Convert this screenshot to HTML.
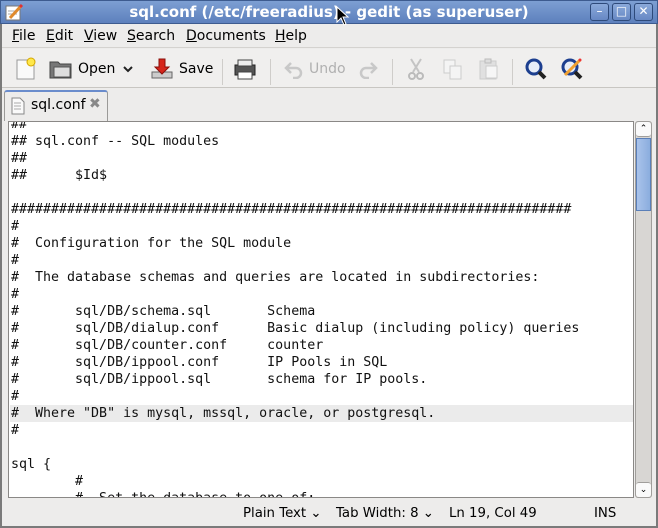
<!DOCTYPE html>
<html><head><meta charset="utf-8"><style>
*{margin:0;padding:0;box-sizing:border-box}
body{width:658px;height:528px;overflow:hidden;background:#edeceb;font-family:"DejaVu Sans","Liberation Sans",sans-serif;font-size:13.3px;color:#000;position:relative}
.abs{position:absolute}
#title{left:0;top:0;width:658px;height:24px;background:linear-gradient(#7d9fd3,#5d80bd);border:1px solid #3d5b8f;color:#fff;font-weight:bold;font-size:15px;text-align:center;line-height:23px}
.wb{top:3px;width:19px;height:18px;border:1px solid #2e4a7a;border-radius:3px;background:linear-gradient(#8aa9da,#6788c4);color:#fff;font-size:12px;text-align:center;line-height:15px}
#frame{left:0;top:24px;width:658px;height:504px;border-left:2px solid #7a7a7a;border-right:2px solid #7a7a7a;border-bottom:2px solid #7a7a7a}
#menu{left:2px;top:24px;width:654px;height:24px;border-bottom:1px solid #d4d2cf}
#menu span{position:absolute;top:4px;font-size:14px}
#tb{left:2px;top:49px;width:654px;height:39px;border-bottom:1px solid #c8c6c2;background:#f0efee}
.tl{position:absolute;top:12px;font-size:14px}
.sep{position:absolute;top:10px;width:1px;height:26px;background:#cfcdca}
#tab{left:4px;top:90px;width:104px;height:31px;background:#edeceb;border:1px solid #9b9a98;border-bottom:none;border-radius:3px 3px 0 0;border-top:2px solid #6a8ccc}
#edit{left:8px;top:121px;width:626px;height:377px;background:#fff;border:1px solid #8a8886;overflow:hidden}
pre{position:absolute;left:2px;top:-6px;font-family:"DejaVu Sans Mono","Liberation Mono",monospace;font-size:13.3px;line-height:17px;color:#111}
#hl{left:1px;top:283px;width:624px;height:17px;background:#ebebeb}
#sb{left:635px;top:121px;width:17px;height:377px;background:#d8d6d3;border:1px solid #a09e9b;border-radius:3px}
#status{left:2px;top:500px;width:654px;height:26px}
#status span{position:absolute;top:6px;font-size:13.3px}
</style></head><body>
<div class="abs" id="frame"></div>
<div class="abs" id="title">sql.conf (/etc/freeradius) - gedit (as superuser)</div>
<svg class="abs" style="left:4px;top:3px" width="20" height="19"><rect x="2" y="3" width="14" height="14" fill="#fff" stroke="#777"/><line x1="4" y1="8" x2="13" y2="8" stroke="#aaa"/><line x1="4" y1="11" x2="13" y2="11" stroke="#aaa"/><line x1="6" y1="15" x2="17" y2="3" stroke="#e08a2c" stroke-width="3"/><line x1="16" y1="4" x2="18" y2="2" stroke="#d33" stroke-width="3"/></svg>
<div class="abs wb" style="left:590px">&#8211;</div>
<div class="abs wb" style="left:612px">&#9633;</div>
<div class="abs wb" style="left:634px">&#10005;</div>
<svg class="abs" style="left:336px;top:6px" width="14" height="22"><path d="M1 1 L1 16 L5 12 L8 19 L10 18 L7 11 L12 11 Z" fill="#000" stroke="#fff" stroke-width="1"/></svg>
<div class="abs" id="menu">
<span style="left:10px"><u>F</u>ile</span><span style="left:44px"><u>E</u>dit</span><span style="left:82px"><u>V</u>iew</span><span style="left:125px"><u>S</u>earch</span><span style="left:184px"><u>D</u>ocuments</span><span style="left:273px"><u>H</u>elp</span>
</div>
<div class="abs" id="tb">
<svg style="position:absolute;left:12px;top:8px" width="24" height="24"><path d="M3 3h12l5 5v14H3z" fill="#fafafa" stroke="#999"/><circle cx="17" cy="5" r="4" fill="#ffe84a" stroke="#d4a600"/></svg>
<svg style="position:absolute;left:47px;top:9px" width="24" height="22"><path d="M1 4h8l2 2h11v14H1z" fill="#777" stroke="#444"/><rect x="5" y="9" width="16" height="10" fill="#ddd" stroke="#555"/></svg>
<span class="tl" style="left:76px">Open</span>
<svg style="position:absolute;left:120px;top:15px" width="12" height="10"><path d="M2 3l4 4 4-4" fill="none" stroke="#222" stroke-width="2"/></svg>
<svg style="position:absolute;left:148px;top:8px" width="24" height="24"><path d="M2 15h20v6H2z" fill="#ccc" stroke="#666"/><path d="M9 2h6v8h4l-7 7-7-7h4z" fill="#d6261c" stroke="#8a0f0a"/></svg>
<span class="tl" style="left:177px">Save</span>
<div class="sep" style="left:220px"></div>
<svg style="position:absolute;left:231px;top:8px" width="24" height="24"><rect x="2" y="8" width="20" height="10" fill="#555" stroke="#222"/><rect x="5" y="3" width="14" height="6" fill="#eee" stroke="#444"/><rect x="5" y="15" width="14" height="7" fill="#fff" stroke="#444"/></svg>
<div class="sep" style="left:268px"></div>
<svg style="position:absolute;left:281px;top:10px" width="22" height="20"><path d="M8 4L3 9l5 5M3 9h10a5 5 0 010 10h-3" fill="none" stroke="#c8c8c8" stroke-width="2.5"/></svg>
<span class="tl" style="left:307px;color:#b0b0b0">Undo</span>
<svg style="position:absolute;left:355px;top:10px" width="22" height="20"><path d="M14 4l5 5-5 5M19 9H9a5 5 0 000 10h3" fill="none" stroke="#c8c8c8" stroke-width="2.5"/></svg>
<div class="sep" style="left:390px"></div>
<svg style="position:absolute;left:403px;top:8px" width="22" height="24"><path d="M6 2l8 13M16 2L8 15" stroke="#c4c4c4" stroke-width="2"/><circle cx="7" cy="19" r="3" fill="none" stroke="#bbb" stroke-width="2"/><circle cx="15" cy="19" r="3" fill="none" stroke="#bbb" stroke-width="2"/></svg>
<svg style="position:absolute;left:440px;top:9px" width="22" height="22"><rect x="2" y="2" width="11" height="13" fill="#f4f4f4" stroke="#ccc"/><rect x="8" y="8" width="11" height="13" fill="#f4f4f4" stroke="#ccc"/></svg>
<svg style="position:absolute;left:476px;top:8px" width="22" height="24"><rect x="2" y="4" width="16" height="18" fill="#e0e0e0" stroke="#ccc"/><rect x="7" y="2" width="6" height="4" fill="#ddd" stroke="#bbb"/><rect x="8" y="9" width="11" height="12" fill="#f6f6f6" stroke="#ccc"/></svg>
<div class="sep" style="left:510px"></div>
<svg style="position:absolute;left:522px;top:8px" width="24" height="24"><circle cx="10" cy="10" r="7" fill="#e8eef8" stroke="#1d3f8f" stroke-width="3"/><line x1="15" y1="15" x2="21" y2="21" stroke="#222" stroke-width="4"/></svg>
<svg style="position:absolute;left:558px;top:7px" width="24" height="25"><circle cx="10" cy="11" r="7" fill="#e8eef8" stroke="#1d3f8f" stroke-width="3"/><line x1="15" y1="16" x2="21" y2="22" stroke="#222" stroke-width="4"/><line x1="5" y1="19" x2="20" y2="4" stroke="#f0a030" stroke-width="3"/><circle cx="20" cy="4" r="1.5" fill="#e33"/></svg>
</div>
<div class="abs" id="tab">
<svg style="position:absolute;left:6px;top:5px" width="14" height="18"><path d="M1 1h8l4 4v12H1z" fill="#fafafa" stroke="#888"/><path d="M3 6h7M3 9h7M3 12h7" stroke="#aaa"/></svg>
<span style="position:absolute;left:26px;top:5px;font-size:14px">sql.conf</span>
<span style="position:absolute;left:84px;top:4px;font-size:14px;color:#888;font-weight:bold">&#10006;</span>
</div>
<div class="abs" id="edit">
<div class="abs" id="hl"></div>
<pre>##
## sql.conf -- SQL modules
##
##      $Id$

######################################################################
#
#  Configuration for the SQL module
#
#  The database schemas and queries are located in subdirectories:
#
#       sql/DB/schema.sql       Schema
#       sql/DB/dialup.conf      Basic dialup (including policy) queries
#       sql/DB/counter.conf     counter
#       sql/DB/ippool.conf      IP Pools in SQL
#       sql/DB/ippool.sql       schema for IP pools.
#
#  Where "DB" is mysql, mssql, oracle, or postgresql.
#

sql {
        #
        #  Set the database to one of:</pre>
</div>
<div class="abs" id="sb">
<div class="abs" style="left:0;top:0;width:15px;height:15px;background:#fafafa;border-bottom:1px solid #a09e9b;border-radius:3px;font-size:9px;text-align:center;line-height:15px">&#8963;</div>
<div class="abs" style="left:0;top:16px;width:15px;height:73px;background:linear-gradient(90deg,#a9c3ea,#8badde);border:1px solid #5a7fb8"></div>
<div class="abs" style="left:0;bottom:0;width:15px;height:15px;background:#fafafa;border-top:1px solid #a09e9b;border-radius:3px;font-size:9px;text-align:center;line-height:14px">&#8964;</div>
</div>
<div class="abs" id="status">
<span style="left:241px">Plain Text &#8964;</span>
<span style="left:334px">Tab Width:&nbsp;8 &#8964;</span>
<span style="left:447px">Ln 19, Col 49</span>
<span style="left:592px">INS</span>
</div>
</body></html>
